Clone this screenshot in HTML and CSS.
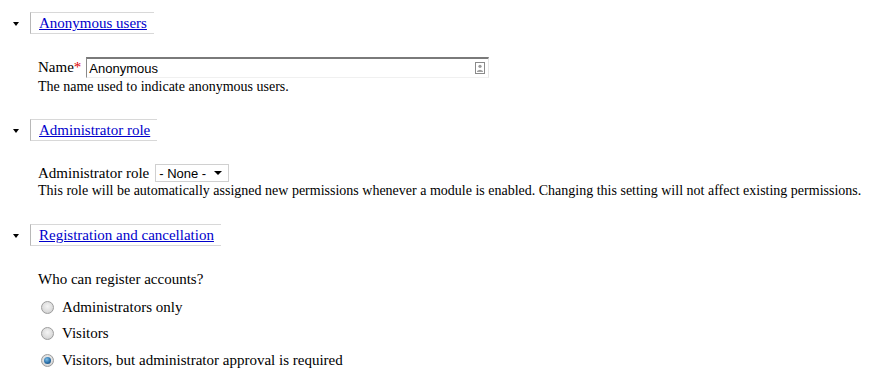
FILE: index.html
```html
<!DOCTYPE html>
<html>
<head>
<meta charset="utf-8">
<link rel="stylesheet" href="styles.css">
</head>
<body>
<div class="page">
  <section class="fs">
    <div class="legend-row">
      <span class="tri"></span>
      <span class="legend"><a href="#">Anonymous users</a></span>
    </div>
    <div class="body">
      <div class="field">
        <label class="lbl">Name<span class="req">*</span></label>
        <span class="input">
          <span class="val">Anonymous</span>
          <svg class="ico" width="10" height="12" viewBox="0 0 10 12">
            <rect x="0.5" y="0.5" width="9" height="11" fill="#fff" stroke="#8a8a8a"/>
            <circle cx="5" cy="4.3" r="1.6" fill="#9a9a9a"/>
            <path d="M2 9.5 Q5 5.8 8 9.5 Z" fill="#9a9a9a"/>
            <rect x="2" y="8.8" width="6" height="1" fill="#9a9a9a"/>
          </svg>
        </span>
      </div>
      <div class="desc">The name used to indicate anonymous users.</div>
    </div>
  </section>

  <section class="fs role">
    <div class="legend-row">
      <span class="tri"></span>
      <span class="legend"><a href="#">Administrator role</a></span>
    </div>
    <div class="body">
      <div class="field">
        <label class="lbl">Administrator role</label>
        <span class="select"><span class="val">- None -</span><span class="arrow"></span></span>
      </div>
      <div class="desc">This role will be automatically assigned new permissions whenever a module is enabled. Changing this setting will not affect existing permissions.</div>
    </div>
  </section>

  <section class="fs reg">
    <div class="legend-row">
      <span class="tri"></span>
      <span class="legend"><a href="#">Registration and cancellation</a></span>
    </div>
    <div class="body">
      <div class="question">Who can register accounts?</div>
      <div class="radios">
        <div class="radio"><span class="rb"></span>Administrators only</div>
        <div class="radio"><span class="rb"></span>Visitors</div>
        <div class="radio"><span class="rb on"></span>Visitors, but administrator approval is required</div>
      </div>
    </div>
  </section>
</div>
</body>
</html>
```

FILE: styles.css
```css
html, body {
  margin: 0;
  padding: 0;
  background: #fff;
}
body {
  font-family: "Liberation Serif", "Times New Roman", serif;
  font-size: 15px;
  color: #000;
}
.page {
  padding: 12px 0 0 13px;
}
.fs {
  margin-bottom: 24px;
}
.fs.role {
  margin-bottom: 25px;
}
.fs.reg {
  margin-bottom: 0;
}
.legend-row {
  display: flex;
  align-items: center;
  height: 22px;
}
.tri {
  width: 0;
  height: 0;
  border-left: 3.5px solid transparent;
  border-right: 3.5px solid transparent;
  border-top: 4px solid #000;
  margin-right: 11px;
  margin-top: 1px;
}
.legend {
  display: flex;
  align-items: center;
  height: 20px;
  border: 1px solid #d8d8d8;
  border-left-color: #b8b8b8;
  border-right: none;
  padding: 0 7px 0 8px;
  white-space: nowrap;
  line-height: 20px;
}
.legend a {
  color: #0000cc;
  text-decoration: underline;
}
.body {
  padding-left: 25px;
  padding-top: 23px;
}
.reg .body {
  padding-top: 25px;
}
.field {
  display: flex;
  align-items: center;
}
.lbl {
  margin-right: 5px;
}
.req {
  color: #d00;
}
.input {
  display: flex;
  align-items: center;
  justify-content: space-between;
  box-sizing: border-box;
  width: 403px;
  height: 21px;
  border-top: 2px solid #7a7a7a;
  border-left: 1px solid #8a8a8a;
  border-right: 1px solid #e6e6e6;
  border-bottom: 1px solid #f0f0f0;
  padding: 0 3px 0 2px;
  font-family: "Liberation Sans", Arial, sans-serif;
  font-size: 13px;
}
.ico {
  display: block;
}
.select {
  display: flex;
  align-items: center;
  justify-content: space-between;
  box-sizing: border-box;
  width: 74px;
  height: 18px;
  border: 1px solid #d0d0d0;
  margin-left: 1px;
  padding: 0 6px 0 3px;
  font-family: "Liberation Sans", Arial, sans-serif;
  font-size: 13px;
}
.arrow {
  width: 0;
  height: 0;
  border-left: 4px solid transparent;
  border-right: 4px solid transparent;
  border-top: 4px solid #000;
}
.desc {
  font-size: 14px;
  line-height: 16px;
  margin-top: 1px;
}
.question {
  line-height: 16px;
}
.radios {
  padding-top: 7px;
  padding-left: 3px;
}
.radio {
  display: flex;
  align-items: center;
  height: 26.5px;
}
.rb {
  box-sizing: border-box;
  width: 13px;
  height: 13px;
  border-radius: 50%;
  border: 1px solid #9c9c9c;
  background: radial-gradient(circle at 50% 40%, #f4f4f4 0%, #dcdcdc 60%, #c4c4c4 100%);
  margin-right: 8px;
  position: relative;
}
.rb.on::after {
  content: "";
  position: absolute;
  left: 2px;
  top: 2px;
  width: 7px;
  height: 7px;
  border-radius: 50%;
  background: radial-gradient(circle at 40% 35%, #7fc0e8 0%, #2a6fa8 55%, #113c66 100%);
}
```
